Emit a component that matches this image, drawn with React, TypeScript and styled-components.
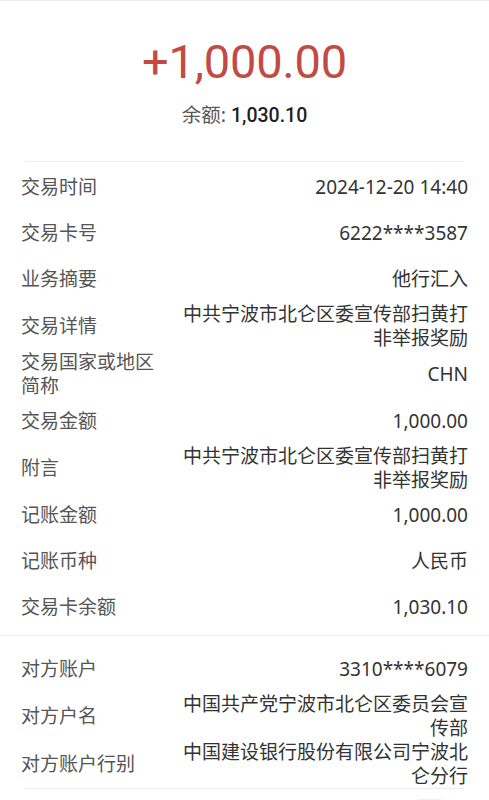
import styled, { createGlobalStyle } from 'styled-components';

const GlobalStyle = createGlobalStyle`
  html, body {
    margin: 0;
    padding: 0;
    background: #fff;
  }
  body {
    font-family: 'Noto Sans', 'Noto Sans CJK SC', sans-serif;
    -webkit-font-smoothing: antialiased;
  }
`;

type Item = { label: string; value: string };

const mainItems: Item[] = [
  { label: '交易时间', value: '2024-12-20 14:40' },
  { label: '交易卡号', value: '6222****3587' },
  { label: '业务摘要', value: '他行汇入' },
  { label: '交易详情', value: '中共宁波市北仑区委宣传部扫黄打非举报奖励' },
  { label: '交易国家或地区简称', value: 'CHN' },
  { label: '交易金额', value: '1,000.00' },
  { label: '附言', value: '中共宁波市北仑区委宣传部扫黄打非举报奖励' },
  { label: '记账金额', value: '1,000.00' },
  { label: '记账币种', value: '人民币' },
  { label: '交易卡余额', value: '1,030.10' },
];

const partyItems: Item[] = [
  { label: '对方账户', value: '3310****6079' },
  { label: '对方户名', value: '中国共产党宁波市北仑区委员会宣传部' },
  { label: '对方账户行别', value: '中国建设银行股份有限公司宁波北仑分行' },
];

const App = () => {
  return (
    <Page>
      <GlobalStyle />
      <Header>
        <Amount>+1,000.00</Amount>
        <Balance>
          <span className='label'>余额: </span>
          <span className='value'>1,030.10</span>
        </Balance>
      </Header>

      <Section $top={2} $bottom={5}>
        {mainItems.map((item) => (
          <Row key={item.label}>
            <Label>{item.label}</Label>
            <Value>{item.value}</Value>
          </Row>
        ))}
      </Section>

      <Section $top={10} $bottom={0}>
        {partyItems.map((item) => (
          <Row key={item.label}>
            <Label>{item.label}</Label>
            <Value>{item.value}</Value>
          </Row>
        ))}
      </Section>

      <Footer>
        <GhostButton />
      </Footer>
    </Page>
  );
};

const Page = styled.div`
  border-top: 1px solid #ececec;
  min-height: 100vh;
  box-sizing: border-box;
`;

const Header = styled.header`
  display: flex;
  flex-direction: column;
  align-items: center;
  padding: 33px 0 33px;
  margin: 0 25px;
  border-bottom: 1px solid #ececec;
`;

const Amount = styled.div`
  font-family: Roboto, 'Noto Sans', sans-serif;
  font-size: 47px;
  line-height: 56px;
  color: #c24a42;
  letter-spacing: -0.2px;
`;

const Balance = styled.div`
  margin-top: 12px;
  font-size: 19.5px;
  line-height: 25px;
  .label {
    color: #555;
  }
  .value {
    color: #1f1f1f;
    font-family: Roboto, 'Noto Sans', sans-serif;
    font-weight: 500;
  }
`;

const Section = styled.section<{ $top: number; $bottom: number }>`
  padding: ${(p) => p.$top}px 21px ${(p) => p.$bottom}px;
  & + & {
    border-top: 1px solid #ececec;
  }
`;

const Row = styled.div`
  display: flex;
  justify-content: space-between;
  align-items: center;
  min-height: 46px;
  font-size: 19px;
  line-height: 24px;
`;

const Label = styled.div`
  color: #555;
  max-width: 7.2em;
  flex-shrink: 0;
`;

const Value = styled.div`
  color: #333;
  text-align: right;
  max-width: 15.2em;
`;

const Footer = styled.footer`
  display: flex;
  justify-content: flex-end;
  margin: 0 25px;
  border-top: 1px solid #ececec;
  padding: 10px 12px 20px;
`;

const GhostButton = styled.div`
  width: 46px;
  height: 30px;
  border-radius: 15px;
  background: #f1f1f1;
`;

export default App;
